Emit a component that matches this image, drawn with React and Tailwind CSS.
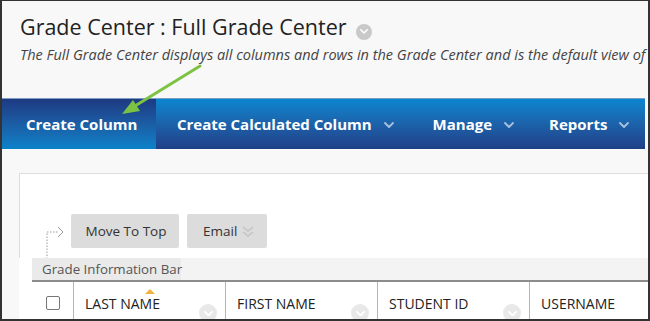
import React from "react";

function CircleChevron({ size = 18, bg = "bg-[#e8e8e8]" }) {
  return (
    <span
      className={`inline-flex items-center justify-center rounded-full ${bg}`}
      style={{ width: size, height: size }}
    >
      <svg width={size * 0.5} height={size * 0.3} viewBox="0 0 10 6" fill="none">
        <path d="M1 1l4 4 4-4" stroke="#fff" strokeWidth="2" strokeLinecap="round" strokeLinejoin="round" />
      </svg>
    </span>
  );
}

function NavChevron() {
  return (
    <svg width="10" height="6" viewBox="0 0 10 6" fill="none" className="ml-[12px] mt-[2px]">
      <path d="M1 1l4 4 4-4" stroke="#a8c0dc" strokeWidth="1.8" strokeLinecap="round" strokeLinejoin="round" />
    </svg>
  );
}

function HeaderCell({ label, sorted }) {
  return (
    <div className="relative w-[152px] shrink-0 border-r border-[#b5b5b5] flex items-start pl-[11px] pr-[8px]">
      {sorted && (
        <span className="absolute left-[71px] top-[7px] w-0 h-0 border-l-[5px] border-r-[5px] border-b-[5px] border-l-transparent border-r-transparent border-b-[#f4b13e]" />
      )}
      <span className="text-[14px] leading-[20px] text-[#222] mt-[12px] whitespace-nowrap">{label}</span>
      <span className="ml-auto mt-[16px]">
        <CircleChevron />
      </span>
    </div>
  );
}

export default function App() {
  return (
    <div className="relative w-[650px] h-[321px] overflow-hidden bg-[#f8f8f8] border-l-2 border-r-2 border-t border-b-2 border-[#333] font-['Open_Sans',sans-serif]">
      {/* Page title */}
      <div className="h-[97px] pl-[18px] pt-[11px]">
        <div className="flex items-center">
          <h1 className="text-[21.5px] leading-[30px] text-[#222]">Grade Center : Full Grade Center</h1>
          <span className="ml-[9px] mt-[2px]">
            <CircleChevron size={16} bg="bg-[#c9c9c9]" />
          </span>
        </div>
        <p className="mt-[2px] text-[14.5px] italic text-[#444] whitespace-nowrap">
          The Full Grade Center displays all columns and rows in the Grade Center and is the default view of
        </p>
      </div>

      {/* Action bar */}
      <div className="flex h-[51px] mr-[3px] border-t border-[#7f9cc2] bg-gradient-to-b from-[#0886cf] to-[#1f3f87] text-white text-[15px] font-bold whitespace-nowrap">
        <div className="w-[154px] shrink-0 flex items-center pl-[24px] bg-gradient-to-b from-[#1d3a82] to-[#0982c9]">
          Create Column
        </div>
        <div className="flex items-center pl-[21px]">
          Create Calculated Column
          <NavChevron />
        </div>
        <div className="flex items-center pl-[39px]">
          Manage
          <NavChevron />
        </div>
        <div className="flex items-center pl-[35px]">
          Reports
          <NavChevron />
        </div>
      </div>

      {/* Grade grid panel */}
      <div className="pl-[17px] pt-[24px]">
        <div className="bg-white">
          <div className="h-[85px] border-l border-t border-[#dedede] flex items-start pt-[40px] pl-[26px]">
            <svg width="18" height="34" viewBox="0 0 18 34" fill="none" className="mt-[11px]">
              <path d="M1 34V7H12" stroke="#9a9a9a" strokeDasharray="1.5 1.5" />
              <path d="M12 2l5 5-5 5" stroke="#9a9a9a" strokeWidth="1" />
            </svg>
            <button className="ml-[7px] w-[108px] h-[34px] rounded-[2px] bg-[#dcdcdc] text-[13.5px] text-[#333] pl-[2px]">
              Move To Top
            </button>
            <button className="ml-[8px] w-[80px] h-[34px] rounded-[2px] bg-[#dcdcdc] text-[13.5px] text-[#333] flex items-center pl-[16px]">
              Email
              <svg width="14" height="14" viewBox="0 0 14 14" fill="none" className="ml-[4px]">
                <path d="M2 3l5 4 5-4M2 8l5 4 5-4" stroke="#c4c4c4" strokeWidth="1.6" />
              </svg>
            </button>
          </div>

          <div className="ml-[13px]">
            <div className="flex h-[22px] bg-[#f3f3f3]">
              <div className="w-[149px] shrink-0 bg-[#eaeaea] pl-[10px] text-[13.3px] leading-[22px] text-[#555] whitespace-nowrap">
                Grade Information Bar
              </div>
            </div>
            <div className="flex h-[40px] border-t-2 border-[#8c8c8c]">
              <div className="w-[42px] shrink-0 border-r border-[#b5b5b5] flex items-start justify-center pt-[14px]">
                <span className="w-[14px] h-[14px] rounded-[2px] border border-[#777] bg-white" />
              </div>
              <HeaderCell label="LAST NAME" sorted />
              <HeaderCell label="FIRST NAME" />
              <HeaderCell label="STUDENT ID" />
              <div className="flex items-start pl-[11px]">
                <span className="text-[14px] leading-[20px] text-[#222] mt-[12px]">USERNAME</span>
              </div>
            </div>
          </div>
        </div>
      </div>

      {/* Callout arrow */}
      <svg className="absolute left-0 top-0" width="650" height="321" viewBox="0 0 650 321" fill="none">
        <path d="M198 65L128 108" stroke="#7cc243" strokeWidth="3" strokeLinecap="round" />
        <path d="M120 113l18-3-7-11z" fill="#7cc243" />
      </svg>
    </div>
  );
}
